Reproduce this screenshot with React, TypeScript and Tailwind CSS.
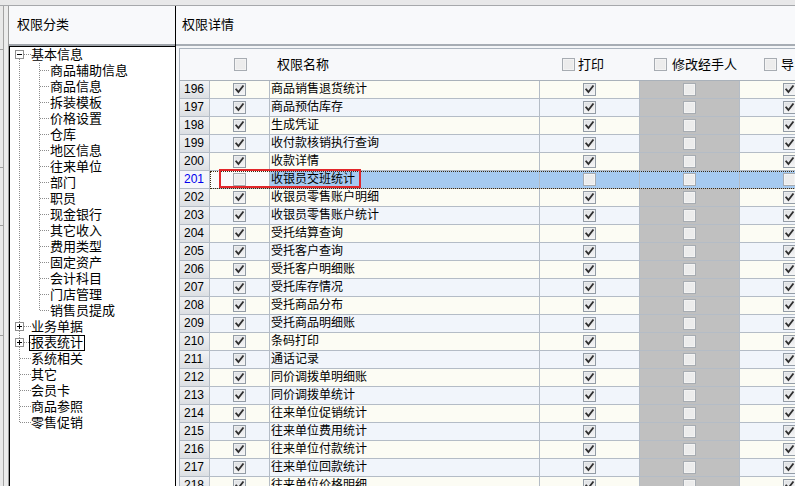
import React from "react";

const FONT = "font-['Liberation_Sans','Noto_Sans_CJK_SC',sans-serif]";

function Check({ checked, dim }: { checked: boolean; dim?: boolean }) {
  return (
    <svg width="13" height="13" viewBox="0 0 13 13" className="block shrink-0">
      <defs>
        <linearGradient id="cbg" x1="0" y1="0" x2="0" y2="1">
          <stop offset="0" stopColor="#dcdee1" />
          <stop offset="1" stopColor="#f7f7f8" />
        </linearGradient>
      </defs>
      <rect x="0.5" y="0.5" width="12" height="12" fill={dim ? "#ececec" : "url(#cbg)"} stroke={dim ? "#a7acb2" : "#939ca6"} />
      <rect x="1.5" y="1.5" width="10" height="10" fill="none" stroke={dim ? "#f6f6f6" : "#f2f3f4"} strokeOpacity="0.7" />
      {checked && (
        <path d="M3.2 6.4 L5.4 9 L9.9 3.2" fill="none" stroke="#2f2f2f" strokeWidth="1.8" strokeLinecap="square" />
      )}
    </svg>
  );
}

type TreeItem = { label: string; level: 0 | 1; box?: "+" | "-"; first?: boolean; last?: boolean; focus?: boolean };

const tree: TreeItem[] = [
  { label: "基本信息", level: 0, box: "-", first: true },
  { label: "商品辅助信息", level: 1 },
  { label: "商品信息", level: 1 },
  { label: "拆装模板", level: 1 },
  { label: "价格设置", level: 1 },
  { label: "仓库", level: 1 },
  { label: "地区信息", level: 1 },
  { label: "往来单位", level: 1 },
  { label: "部门", level: 1 },
  { label: "职员", level: 1 },
  { label: "现金银行", level: 1 },
  { label: "其它收入", level: 1 },
  { label: "费用类型", level: 1 },
  { label: "固定资产", level: 1 },
  { label: "会计科目", level: 1 },
  { label: "门店管理", level: 1 },
  { label: "销售员提成", level: 1, last: true },
  { label: "业务单据", level: 0, box: "+" },
  { label: "报表统计", level: 0, box: "+", focus: true },
  { label: "系统相关", level: 0 },
  { label: "其它", level: 0 },
  { label: "会员卡", level: 0 },
  { label: "商品参照", level: 0 },
  { label: "零售促销", level: 0, last: true },
];

const DOT = "#8c8c8c";

function Gutter({ item }: { item: TreeItem }) {
  if (item.level === 1) {
    return (
      <svg width="40" height="16" className="block shrink-0" shapeRendering="crispEdges">
        <line x1="9.5" y1="0" x2="9.5" y2="16" stroke={DOT} strokeDasharray="1 1" />
        <line x1="29.5" y1="0" x2="29.5" y2={item.last ? 8 : 16} stroke={DOT} strokeDasharray="1 1" />
        <line x1="30" y1="7.5" x2="39" y2="7.5" stroke={DOT} strokeDasharray="1 1" />
      </svg>
    );
  }
  return (
    <svg width="21" height="16" className="block shrink-0" shapeRendering="crispEdges">
      <line x1="9.5" y1={item.first ? 8 : 0} x2="9.5" y2={item.last ? 8 : 16} stroke={DOT} strokeDasharray="1 1" />
      <line x1={item.box ? 14 : 10} y1="7.5" x2="21" y2="7.5" stroke={DOT} strokeDasharray="1 1" />
      {item.box && (
        <>
          <rect x="5.5" y="3.5" width="8" height="8" fill="#ffffff" stroke="#8f8f8f" />
          <line x1="7" y1="7.5" x2="12" y2="7.5" stroke="#000" />
          {item.box === "+" && <line x1="9.5" y1="5" x2="9.5" y2="10" stroke="#000" />}
        </>
      )}
    </svg>
  );
}

const rows: [number, string, boolean][] = [
  [196, "商品销售退货统计", true],
  [197, "商品预估库存", true],
  [198, "生成凭证", true],
  [199, "收付款核销执行查询", true],
  [200, "收款详情", true],
  [201, "收银员交班统计", false],
  [202, "收银员零售账户明细", true],
  [203, "收银员零售账户统计", true],
  [204, "受托结算查询", true],
  [205, "受托客户查询", true],
  [206, "受托客户明细账", true],
  [207, "受托库存情况", true],
  [208, "受托商品分布", true],
  [209, "受托商品明细账", true],
  [210, "条码打印", true],
  [211, "通话记录", true],
  [212, "同价调拨单明细账", true],
  [213, "同价调拨单统计", true],
  [214, "往来单位促销统计", true],
  [215, "往来单位费用统计", true],
  [216, "往来单位付款统计", true],
  [217, "往来单位回款统计", true],
  [218, "往来单位价格明细", true],
];

function GridRow({ n, name, checked }: { n: number; name: string; checked: boolean }) {
  const selected = n === 201;
  const even = n % 2 === 0;
  const bg = selected ? "bg-[#a6caf0]" : even ? "bg-[#fcfcf4]" : "bg-[#f1f5fb]";
  const line = "border-r border-b border-[#b4bcc6]";
  return (
    <div className="relative flex h-[18px] shrink-0">
      <div
        className={`w-[30px] shrink-0 ${line} pl-[4px] text-[12px] leading-[17px] ${
          selected ? "bg-[#f5f7fa] text-[#0000ee]" : "bg-[linear-gradient(#f2f3f5,#dcdfe3)] text-black"
        }`}
      >
        {n}
      </div>
      <div className={`flex shrink-0 ${selected ? "[outline:1px_dotted_#3a2a12] [outline-offset:-1px]" : ""}`}>
        <div className={`w-[60px] shrink-0 ${line} ${selected ? "bg-[#fbfbfb]" : bg} flex items-center justify-center`}>
          <Check checked={checked} dim={!checked} />
        </div>
        <div className={`w-[270px] shrink-0 ${line} ${bg} pl-[1px] text-[12px] leading-[17px] text-black whitespace-nowrap`}>
          {name}
        </div>
        <div className={`w-[100px] shrink-0 ${line} ${bg} flex items-center justify-center`}>
          <Check checked={checked} dim={!checked} />
        </div>
        <div className={`w-[100px] shrink-0 ${line} ${selected ? "bg-[#a6caf0]" : "bg-[#c0c0c0]"} flex items-center justify-center`}>
          <Check checked={false} dim />
        </div>
        <div className={`w-[100px] shrink-0 ${line} ${bg} flex items-center justify-center`}>
          <Check checked={checked} dim={!checked} />
        </div>
      </div>
      {selected && (
        <div className="pointer-events-none absolute left-[39px] top-[-2px] h-[19px] w-[142px] border-2 border-[#e2262a]" />
      )}
    </div>
  );
}

export default function App() {
  return (
    <div className={`w-[795px] h-[486px] overflow-hidden bg-[#f7f8fa] flex flex-col ${FONT} text-black`}>
      <div className="h-[6px] shrink-0 bg-[#e8e8e9] border-b border-[#a6a8ab]" />
      <div className="flex flex-1 min-h-0">
        {/* left edge strip */}
        <div className="w-[9px] shrink-0 flex bg-[#e9e9e9]">
          <div className="w-[3px] flex flex-col">
            <div className="h-[2px]" />
            <div className="h-[42px] border-b border-[#a0a0a0]" />
            <div className="h-[118px] border-b border-[#a0a0a0]" />
            <div className="h-[58px] border-b border-[#a0a0a0]" />
            <div className="h-[110px] border-b border-[#a0a0a0]" />
          </div>
          <div className="w-px bg-[#a3a3a3]" />
          <div className="w-[4px] bg-[#ececec]" />
          <div className="w-px bg-[#9d9d9d]" />
        </div>

        {/* left panel */}
        <div className="w-[167px] shrink-0 flex flex-col border-r border-black">
          <div className="h-[38px] shrink-0 flex items-center pl-[8px] text-[13px] bg-[#f8f9fb]">权限分类</div>
          <div className="h-[2px] shrink-0 bg-[#9fa4aa]" />
          <div className="flex-1 bg-white border-l border-t border-black overflow-hidden">
            {tree.map((t) => (
              <div key={t.label} className="flex h-[16px] items-center">
                <Gutter item={t} />
                {t.focus ? (
                  <span className="-ml-[2px] inline-block h-[16px] border border-black px-px text-[13px] leading-[14px] whitespace-nowrap">
                    {t.label}
                  </span>
                ) : (
                  <span className="text-[13px] leading-[16px] whitespace-nowrap">{t.label}</span>
                )}
              </div>
            ))}
          </div>
        </div>

        {/* right panel */}
        <div className="flex-1 min-w-0 flex flex-col overflow-hidden">
          <div className="h-[38px] shrink-0 flex items-center pl-[6px] text-[13px] bg-[#f8f9fb]">权限详情</div>
          <div className="h-[2px] shrink-0 bg-[#a7adb4]" />
          <div className="h-[2px] shrink-0 bg-[#f4f6f8]" />
          <div className="flex-1 min-h-0 pl-[3px] overflow-hidden">
            <div className="flex flex-col w-max border-l border-t border-[#aab3bd] bg-[#f7f8fa]">
              <div className="flex h-[32px] shrink-0 items-center border-b border-[#a9b1ba] text-[13px]">
                <div className="w-[30px] shrink-0" />
                <div className="w-[60px] shrink-0 flex justify-center">
                  <Check checked={false} dim />
                </div>
                <div className="w-[270px] shrink-0 pl-[7px]">权限名称</div>
                <div className="w-[100px] shrink-0 pl-[22px] flex items-center gap-[3px]">
                  <Check checked={false} dim />
                  <span>打印</span>
                </div>
                <div className="w-[100px] shrink-0 pl-[14px] flex items-center gap-[5px]">
                  <Check checked={false} dim />
                  <span className="whitespace-nowrap">修改经手人</span>
                </div>
                <div className="w-[100px] shrink-0 pl-[24px] flex items-center gap-[4px]">
                  <Check checked={false} dim />
                  <span>导</span>
                </div>
              </div>
              {rows.map(([n, name, c]) => (
                <GridRow key={n} n={n} name={name} checked={c} />
              ))}
            </div>
          </div>
        </div>
      </div>
    </div>
  );
}
